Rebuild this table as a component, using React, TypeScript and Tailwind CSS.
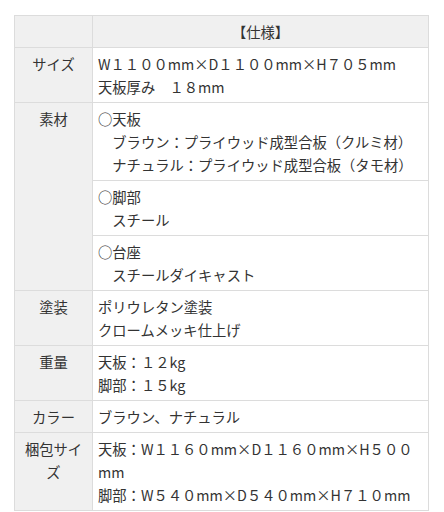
const rows: { label: string; lines: string[] }[] = [
  { label: "塗装", lines: ["ポリウレタン塗装", "クロームメッキ仕上げ"] },
  { label: "重量", lines: ["天板：１２kg", "脚部：１５kg"] },
  { label: "カラー", lines: ["ブラウン、ナチュラル"] },
  { label: "梱包サイズ", lines: ["天板：W１１６０mm×D１１６０mm×H５００mm", "脚部：W５４０mm×D５４０mm×H７１０mm"] },
];

const materials: string[][] = [
  ["○天板", "　ブラウン：プライウッド成型合板（クルミ材）", "　ナチュラル：プライウッド成型合板（タモ材）"],
  ["○脚部", "　スチール"],
  ["○台座", "　スチールダイキャスト"],
];

const labelCls = "border border-[#dcdcdc] bg-[#f0f0f0] px-[6px] py-[4px] text-center align-top";
const valueCls = "border border-[#dcdcdc] bg-white pl-[5px] pr-[4px] py-[4px] text-left align-top";

export default function App() {
  return (
    <div className="min-h-[512px] bg-white pt-[15px] pl-[14px]">
      <table
        className="w-[415px] table-fixed border-collapse text-[14.3px] leading-[23px] text-[#333]"
        style={{ fontFamily: '"Noto Sans CJK JP", "Noto Sans", sans-serif' }}
      >
        <colgroup>
          <col className="w-[78px]" />
          <col />
        </colgroup>
        <tbody>
          <tr>
            <td className={labelCls}></td>
            <td className={labelCls}>【仕様】</td>
          </tr>
          <tr>
            <td className={labelCls}>サイズ</td>
            <td className={valueCls}>
              <div>W１１００mm×D１１００mm×H７０５mm</div>
              <div>天板厚み　１８mm</div>
            </td>
          </tr>
          {materials.map((m, i) => (
            <tr key={i}>
              {i === 0 && (
                <td className={labelCls} rowSpan={3}>
                  素材
                </td>
              )}
              <td className={valueCls}>
                {m.map((l) => (
                  <div key={l} className="whitespace-pre-wrap">{l}</div>
                ))}
              </td>
            </tr>
          ))}
          {rows.map((r) => (
            <tr key={r.label}>
              <td className={labelCls}>{r.label}</td>
              <td className={valueCls}>
                {r.lines.map((l) => (
                  <div key={l}>{l}</div>
                ))}
              </td>
            </tr>
          ))}
        </tbody>
      </table>
    </div>
  );
}
